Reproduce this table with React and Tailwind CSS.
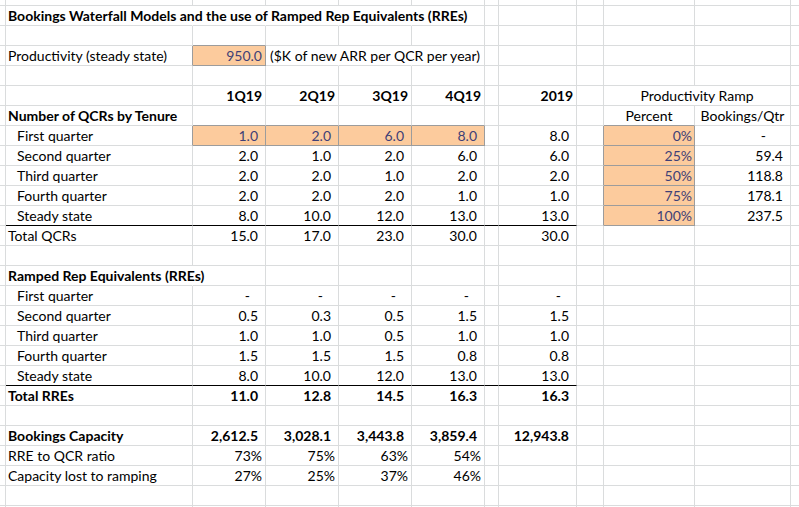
import React from "react";

const COLS = 12;
const NROWS = 27;

// cell spec: t text, a align, b bold, o orange, span
const DATA = {
  1: { 1: { t: "Bookings Waterfall Models and the use of Ramped Rep Equivalents (RREs)", a: "l", b: true } },
  3: {
    1: { t: "Productivity (steady state)", a: "l" },
    2: { t: "950.0", a: "r3", o: true },
    3: { t: "($K of new ARR per QCR per year)", a: "l3" },
  },
  5: {
    2: { t: "1Q19", a: "r3", b: true },
    3: { t: "2Q19", a: "r3", b: true },
    4: { t: "3Q19", a: "r3", b: true },
    5: { t: "4Q19", a: "r3", b: true },
    7: { t: "2019", a: "r3", b: true },
    9: { t: "Productivity Ramp", a: "c", span: 2 },
  },
  6: {
    1: { t: "Number of QCRs by Tenure", a: "l", b: true },
    9: { t: "Percent", a: "c" },
    10: { t: "Bookings/Qtr", a: "c" },
  },
  7: {
    1: { t: "First quarter", a: "li" },
    2: { t: "1.0", a: "r7", o: true },
    3: { t: "2.0", a: "r7", o: true },
    4: { t: "6.0", a: "r7", o: true },
    5: { t: "8.0", a: "r7", o: true },
    7: { t: "8.0", a: "r7" },
    9: { t: "0%", a: "r2", o: true },
    10: { t: "-", a: "jd" },
  },
  8: {
    1: { t: "Second quarter", a: "li" },
    2: { t: "2.0", a: "r7" },
    3: { t: "1.0", a: "r7" },
    4: { t: "2.0", a: "r7" },
    5: { t: "6.0", a: "r7" },
    7: { t: "6.0", a: "r7" },
    9: { t: "25%", a: "r2", o: true },
    10: { t: "59.4", a: "r7" },
  },
  9: {
    1: { t: "Third quarter", a: "li" },
    2: { t: "2.0", a: "r7" },
    3: { t: "2.0", a: "r7" },
    4: { t: "1.0", a: "r7" },
    5: { t: "2.0", a: "r7" },
    7: { t: "2.0", a: "r7" },
    9: { t: "50%", a: "r2", o: true },
    10: { t: "118.8", a: "r7" },
  },
  10: {
    1: { t: "Fourth quarter", a: "li" },
    2: { t: "2.0", a: "r7" },
    3: { t: "2.0", a: "r7" },
    4: { t: "2.0", a: "r7" },
    5: { t: "1.0", a: "r7" },
    7: { t: "1.0", a: "r7" },
    9: { t: "75%", a: "r2", o: true },
    10: { t: "178.1", a: "r7" },
  },
  11: {
    1: { t: "Steady state", a: "li" },
    2: { t: "8.0", a: "r7" },
    3: { t: "10.0", a: "r7" },
    4: { t: "12.0", a: "r7" },
    5: { t: "13.0", a: "r7" },
    7: { t: "13.0", a: "r7" },
    9: { t: "100%", a: "r2", o: true },
    10: { t: "237.5", a: "r7" },
  },
  12: {
    1: { t: "Total QCRs", a: "l" },
    2: { t: "15.0", a: "r7" },
    3: { t: "17.0", a: "r7" },
    4: { t: "23.0", a: "r7" },
    5: { t: "30.0", a: "r7" },
    7: { t: "30.0", a: "r7" },
  },
  14: { 1: { t: "Ramped Rep Equivalents (RREs)", a: "l", b: true } },
  15: {
    1: { t: "First quarter", a: "li" },
    2: { t: "-", a: "d" },
    3: { t: "-", a: "d" },
    4: { t: "-", a: "d" },
    5: { t: "-", a: "d" },
    7: { t: "-", a: "d" },
  },
  16: {
    1: { t: "Second quarter", a: "li" },
    2: { t: "0.5", a: "r7" },
    3: { t: "0.3", a: "r7" },
    4: { t: "0.5", a: "r7" },
    5: { t: "1.5", a: "r7" },
    7: { t: "1.5", a: "r7" },
  },
  17: {
    1: { t: "Third quarter", a: "li" },
    2: { t: "1.0", a: "r7" },
    3: { t: "1.0", a: "r7" },
    4: { t: "0.5", a: "r7" },
    5: { t: "1.0", a: "r7" },
    7: { t: "1.0", a: "r7" },
  },
  18: {
    1: { t: "Fourth quarter", a: "li" },
    2: { t: "1.5", a: "r7" },
    3: { t: "1.5", a: "r7" },
    4: { t: "1.5", a: "r7" },
    5: { t: "0.8", a: "r7" },
    7: { t: "0.8", a: "r7" },
  },
  19: {
    1: { t: "Steady state", a: "li" },
    2: { t: "8.0", a: "r7" },
    3: { t: "10.0", a: "r7" },
    4: { t: "12.0", a: "r7" },
    5: { t: "13.0", a: "r7" },
    7: { t: "13.0", a: "r7" },
  },
  20: {
    1: { t: "Total RREs", a: "l", b: true },
    2: { t: "11.0", a: "r7", b: true },
    3: { t: "12.8", a: "r7", b: true },
    4: { t: "14.5", a: "r7", b: true },
    5: { t: "16.3", a: "r7", b: true },
    7: { t: "16.3", a: "r7", b: true },
  },
  22: {
    1: { t: "Bookings Capacity", a: "l", b: true },
    2: { t: "2,612.5", a: "r7", b: true },
    3: { t: "3,028.1", a: "r7", b: true },
    4: { t: "3,443.8", a: "r7", b: true },
    5: { t: "3,859.4", a: "r7", b: true },
    7: { t: "12,943.8", a: "r7", b: true },
  },
  23: {
    1: { t: "RRE to QCR ratio", a: "l" },
    2: { t: "73%", a: "r3" },
    3: { t: "75%", a: "r3" },
    4: { t: "63%", a: "r3" },
    5: { t: "54%", a: "r3" },
  },
  24: {
    1: { t: "Capacity lost to ramping", a: "l" },
    2: { t: "27%", a: "r3" },
    3: { t: "25%", a: "r3" },
    4: { t: "37%", a: "r3" },
    5: { t: "46%", a: "r3" },
  },
};

// cells whose right gridline is hidden by overflowing text
const HIDE_R = new Set(["1-1", "1-2", "1-3", "1-4", "3-3", "3-4", "14-1"]);
const BLACK_B = new Set();
[11, 19].forEach((r) => {
  for (let c = 1; c <= 7; c++) BLACK_B.add(`${r}-${c}`);
});

const ALIGN = {
  l: "justify-start pl-[2px]",
  l3: "justify-start pl-[4px]",
  li: "justify-start pl-[11px]",
  r7: "justify-end pr-[7px]",
  r3: "justify-end pr-[3px]",
  r2: "justify-end pr-[2px]",
  d: "justify-end pr-[15px]",
  jd: "justify-end pr-[24px]",
  c: "justify-center",
};

const isOrange = (r, c) => !!(DATA[r] && DATA[r][c] && DATA[r][c].o);

function Cell({ r, c, spec }) {
  const orange = isOrange(r, c);
  const key = `${r}-${c}`;
  const span = spec && spec.span === 2;
  const lastCol = span ? c + 1 : c;

  let rightCls = "border-r border-r-[#dadcdd]";
  if (orange || isOrange(r, lastCol + 1)) rightCls = "border-r border-r-[#9c9c9c]";
  else if (HIDE_R.has(key)) rightCls = "border-r border-r-transparent";

  let bottomCls = "border-b border-b-[#dadcdd]";
  if (BLACK_B.has(key)) bottomCls = "border-b border-b-black";
  else if (orange || isOrange(r + 1, c)) bottomCls = "border-b border-b-[#9c9c9c]";

  const h = r === 0 ? "h-[6px]" : "h-[20px]";
  const bg = orange ? "bg-[#fccb9d]" : "";
  const color = orange ? "text-[#3f3f76]" : "text-black";
  const align = spec ? ALIGN[spec.a] : "";
  const weight = spec && spec.b ? "font-bold" : "font-normal";
  const spanCls = span ? "col-span-2" : "";

  return (
    <div
      className={`${h} ${rightCls} ${bottomCls} ${bg} ${color} ${align} ${weight} ${spanCls} flex items-end overflow-visible whitespace-nowrap text-[14px] leading-[18px]`}
    >
      {spec ? <span>{spec.t}</span> : null}
    </div>
  );
}

export default function App() {
  const cells = [];
  for (let r = 0; r < NROWS; r++) {
    for (let c = 0; c < COLS; c++) {
      if (r === 5 && c === 10) continue; // covered by span
      const spec = DATA[r] && DATA[r][c];
      cells.push(<Cell key={`${r}-${c}`} r={r} c={c} spec={spec} />);
    }
  }
  return (
    <div
      className="h-[507px] w-[799px] overflow-hidden bg-white"
      style={{ fontFamily: "Lato, 'Open Sans', sans-serif" }}
    >
      <div className="grid grid-cols-[6px_187px_73px_73px_73px_73px_14px_78px_27px_91px_96px_60px]">
        {cells}
      </div>
    </div>
  );
}
